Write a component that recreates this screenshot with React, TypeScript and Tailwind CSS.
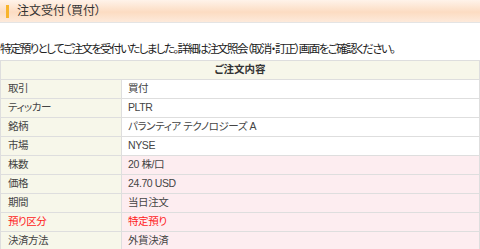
export default function App() {
  const rows: { label: string; value: string; pink?: boolean; red?: boolean }[] = [
    { label: "取引", value: "買付" },
    { label: "ティッカー", value: "PLTR" },
    { label: "銘柄", value: "パランティア テクノロジーズ A" },
    { label: "市場", value: "NYSE" },
    { label: "株数", value: "20 株/口", pink: true },
    { label: "価格", value: "24.70 USD", pink: true },
    { label: "期間", value: "当日注文", pink: true },
    { label: "預り区分", value: "特定預り", pink: true, red: true },
    { label: "決済方法", value: "外貨決済", pink: true },
  ]

  return (
    <main className="w-[480px] bg-white text-[#333] font-['Liberation_Sans','Noto_Sans_CJK_JP',sans-serif] [font-feature-settings:'palt']">
      {/* ページタイトル */}
      <div className="h-[23px] flex items-center border-b border-[#e4e4e4] bg-[linear-gradient(to_bottom,#fff3ea_0%,#fcdcc2_55%,#fdeadb_100%)]">
        <span className="ml-[6px] w-[3px] h-[13px] bg-[#f8b42c]" />
        <h1 className="ml-[8px] text-[12px] leading-[14px] text-[#333]">注文受付（買付）</h1>
      </div>

      <p className="pt-[18px] pb-[3px] text-[11.5px] leading-[16px] tracking-[-1.6px] text-[#222]">
        特定預りとしてご注文を受付いたしました。詳細は注文照会（取消・訂正）画面をご確認ください。
      </p>

      <div className="border-t border-l border-r border-[#dedede] text-[10.5px] text-[#444]">
        <div className="h-[19px] flex items-center justify-center border-b border-[#dedede] bg-[#f7f7ea] font-bold text-[#333]">
          ご注文内容
        </div>
        {rows.map((r) => (
          <div key={r.label} className="grid grid-cols-[121px_1fr] h-[19px] border-b border-[#dedede]">
            <div className={`flex items-center pl-[7px] border-r border-[#dedede] bg-[#f7f7ea] tracking-[-0.5px] ${r.red ? "text-[#ff1a1a]" : ""}`}>
              {r.label}
            </div>
            <div
              className={`flex items-center pl-[6px] tracking-[-0.4px] ${r.pink ? "bg-[#fdedf0]" : "bg-white"} ${r.red ? "text-[#ff1a1a]" : ""}`}
            >
              {r.value}
            </div>
          </div>
        ))}
      </div>
    </main>
  )
}
